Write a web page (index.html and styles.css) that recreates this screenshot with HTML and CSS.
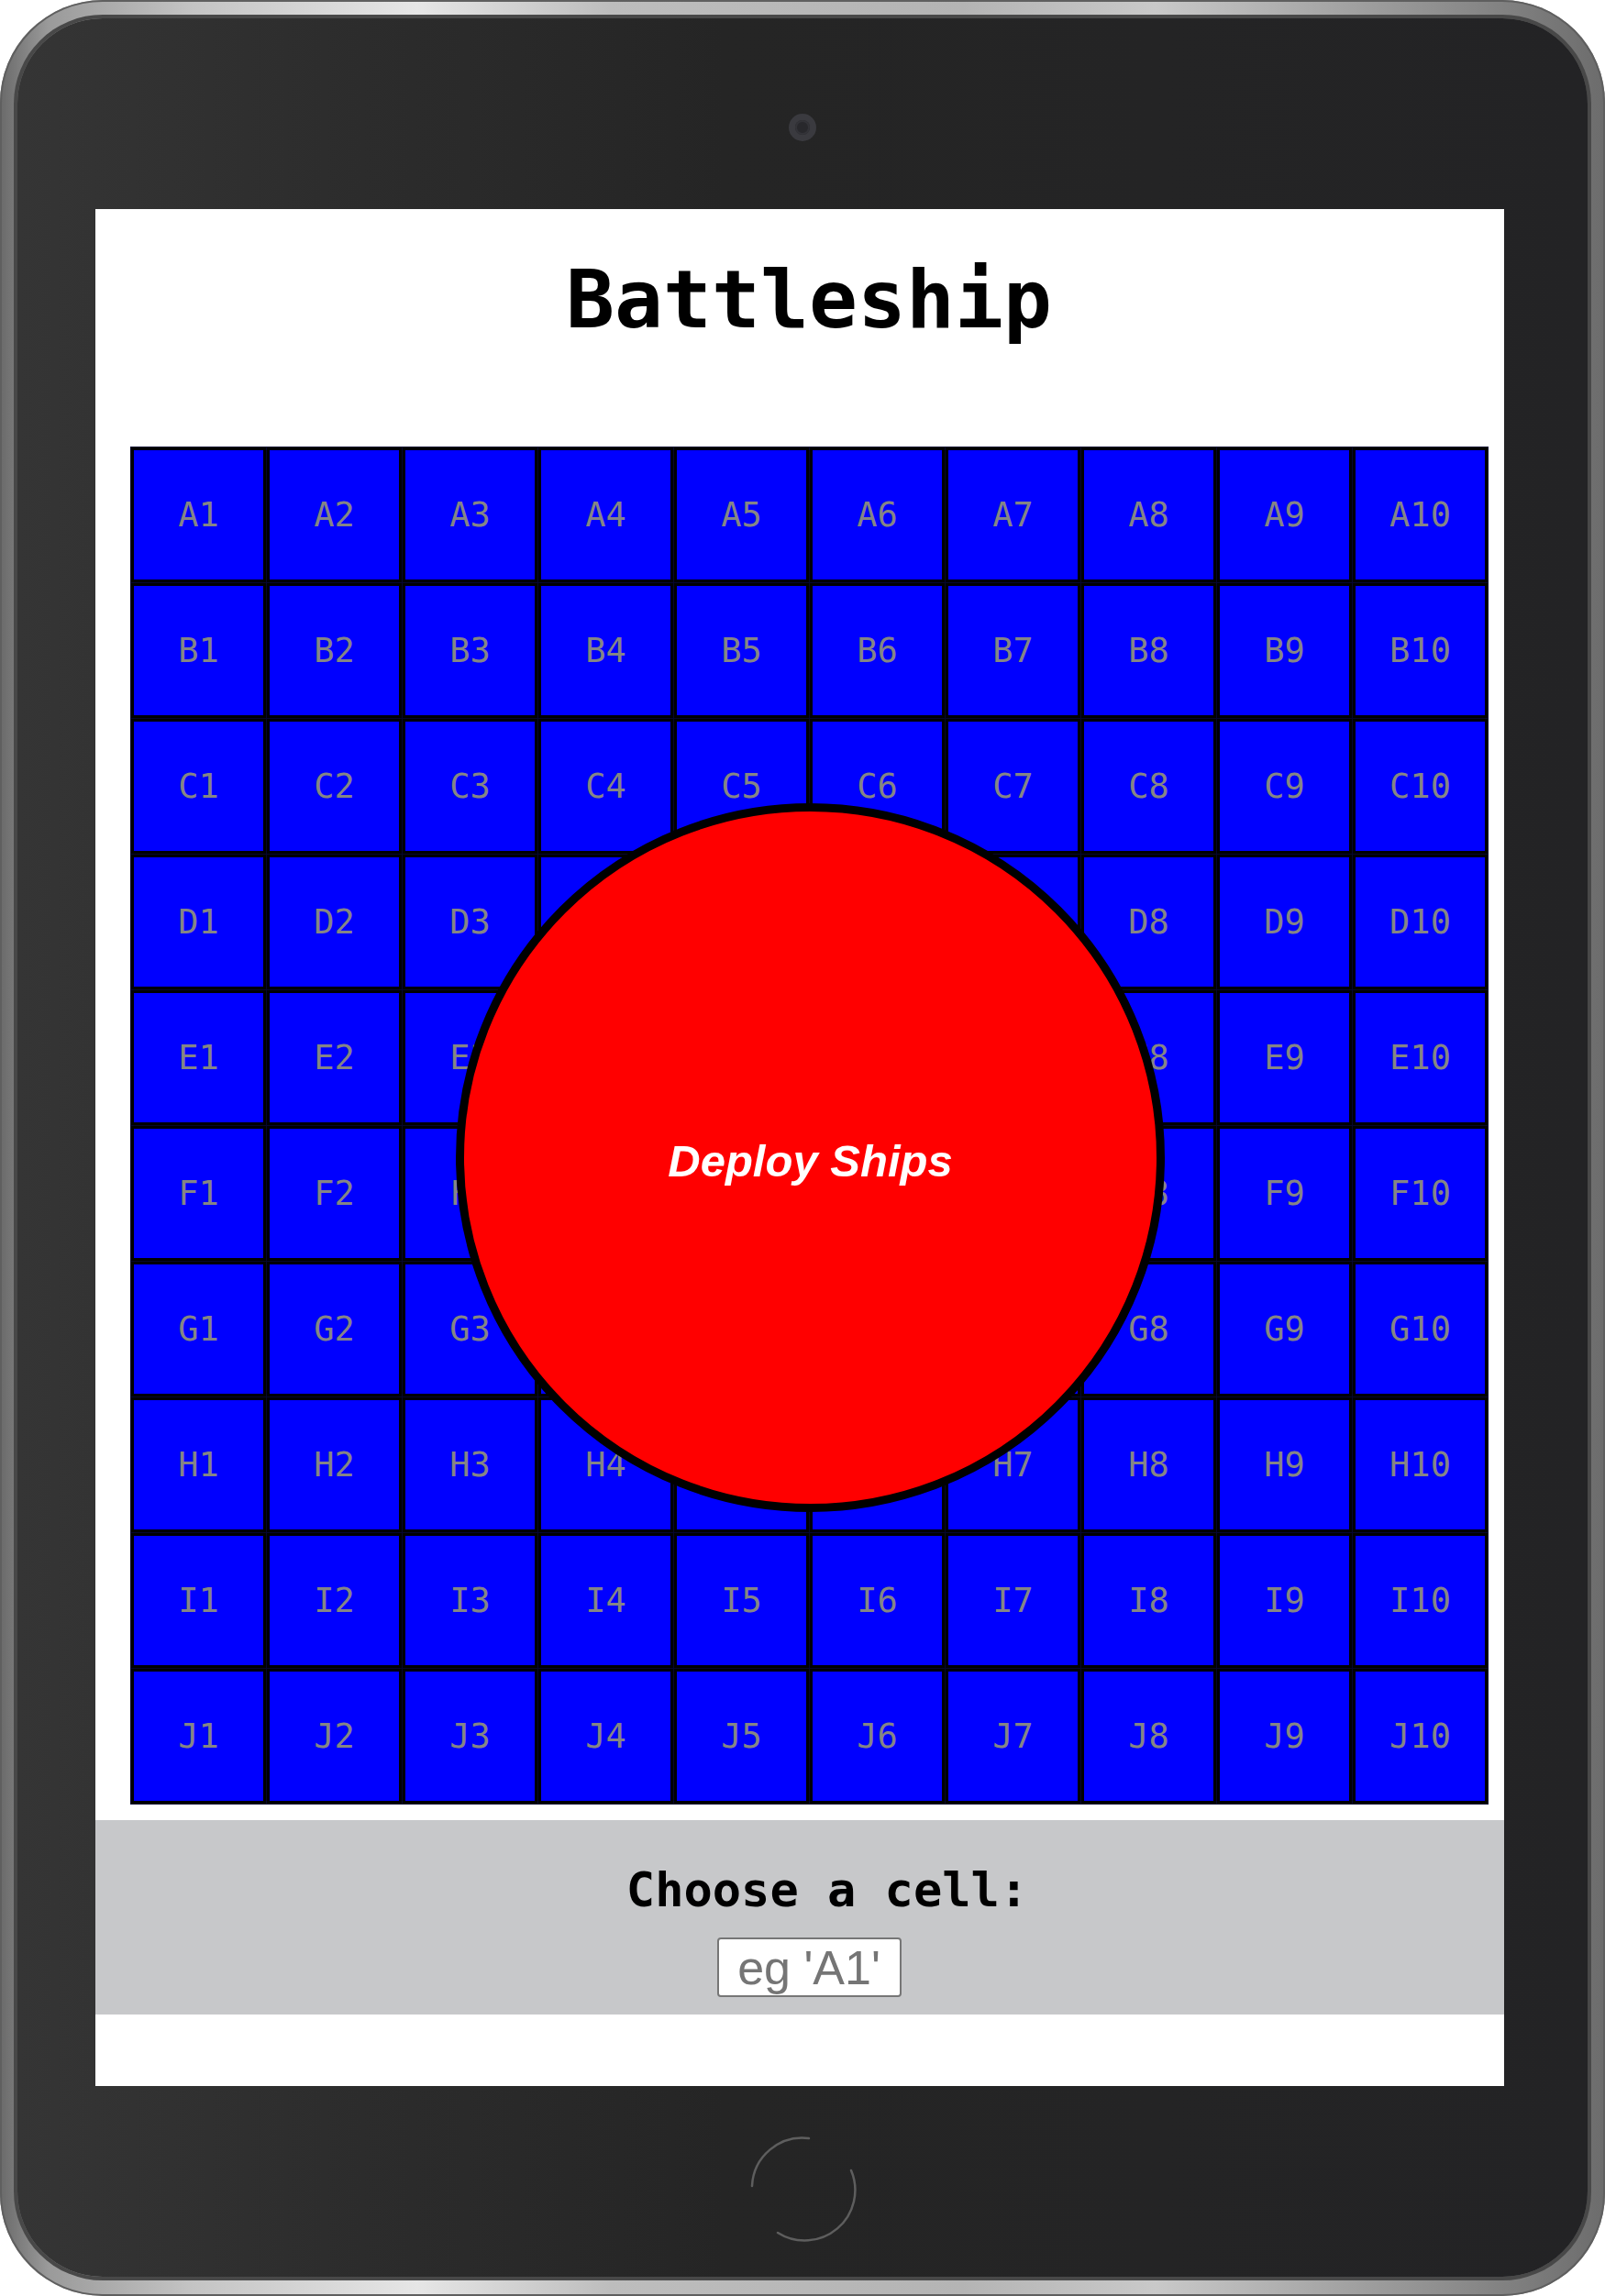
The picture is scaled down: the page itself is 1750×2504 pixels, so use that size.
FILE: index.html
```html
<!DOCTYPE html>
<html lang="en">
<head>
<meta charset="utf-8">
<title>Battleship</title>
<link rel="stylesheet" href="styles.css">
</head>
<body>
<div class="device">
  <div class="bezel">
    <div class="topbar"><div class="camera"><div class="lens"></div></div></div>
    <div class="screen">
      <div class="content">
        <h1 class="title">Battleship</h1>
        <div class="board">
          <div class="cell">A1</div><div class="cell">A2</div><div class="cell">A3</div><div class="cell">A4</div><div class="cell">A5</div><div class="cell">A6</div><div class="cell">A7</div><div class="cell">A8</div><div class="cell">A9</div><div class="cell">A10</div>
          <div class="cell">B1</div><div class="cell">B2</div><div class="cell">B3</div><div class="cell">B4</div><div class="cell">B5</div><div class="cell">B6</div><div class="cell">B7</div><div class="cell">B8</div><div class="cell">B9</div><div class="cell">B10</div>
          <div class="cell">C1</div><div class="cell">C2</div><div class="cell">C3</div><div class="cell">C4</div><div class="cell">C5</div><div class="cell">C6</div><div class="cell">C7</div><div class="cell">C8</div><div class="cell">C9</div><div class="cell">C10</div>
          <div class="cell">D1</div><div class="cell">D2</div><div class="cell">D3</div><div class="cell">D4</div><div class="cell">D5</div><div class="cell">D6</div><div class="cell">D7</div><div class="cell">D8</div><div class="cell">D9</div><div class="cell">D10</div>
          <div class="cell">E1</div><div class="cell">E2</div><div class="cell">E3</div><div class="cell">E4</div><div class="cell">E5</div><div class="cell">E6</div><div class="cell">E7</div><div class="cell">E8</div><div class="cell">E9</div><div class="cell">E10</div>
          <div class="cell">F1</div><div class="cell">F2</div><div class="cell">F3</div><div class="cell">F4</div><div class="cell">F5</div><div class="cell">F6</div><div class="cell">F7</div><div class="cell">F8</div><div class="cell">F9</div><div class="cell">F10</div>
          <div class="cell">G1</div><div class="cell">G2</div><div class="cell">G3</div><div class="cell">G4</div><div class="cell">G5</div><div class="cell">G6</div><div class="cell">G7</div><div class="cell">G8</div><div class="cell">G9</div><div class="cell">G10</div>
          <div class="cell">H1</div><div class="cell">H2</div><div class="cell">H3</div><div class="cell">H4</div><div class="cell">H5</div><div class="cell">H6</div><div class="cell">H7</div><div class="cell">H8</div><div class="cell">H9</div><div class="cell">H10</div>
          <div class="cell">I1</div><div class="cell">I2</div><div class="cell">I3</div><div class="cell">I4</div><div class="cell">I5</div><div class="cell">I6</div><div class="cell">I7</div><div class="cell">I8</div><div class="cell">I9</div><div class="cell">I10</div>
          <div class="cell">J1</div><div class="cell">J2</div><div class="cell">J3</div><div class="cell">J4</div><div class="cell">J5</div><div class="cell">J6</div><div class="cell">J7</div><div class="cell">J8</div><div class="cell">J9</div><div class="cell">J10</div>
          <button class="deploy" type="button">Deploy Ships</button>
        </div>
      </div>
      <div class="prompt">
        <label class="prompt-label" for="cell-input">Choose a cell:</label>
        <input class="prompt-input" id="cell-input" type="text" placeholder="eg 'A1'">
      </div>
    </div>
    <div class="bottombar">
      <svg class="home" width="120" height="120" viewBox="0 0 120 120" aria-hidden="true">
        <path d="M5 57 A55 55 0 0 1 67 5" fill="none" stroke="#5e5e5e" stroke-width="2.5" stroke-linecap="round"/>
        <path d="M113 40 A55 55 0 0 1 33 108" fill="none" stroke="#5e5e5e" stroke-width="2.5" stroke-linecap="round"/>
      </svg>
    </div>
  </div>
</div>
</body>
</html>
```

FILE: styles.css
```css
html, body {
  margin: 0;
  padding: 0;
  background: #ffffff;
}

.device {
  box-sizing: border-box;
  width: 1750px;
  height: 2504px;
  padding: 20px 19px 21px 19px;
  border-radius: 112px;
  background: linear-gradient(90deg, #6a6a6a 0%, #9a9a9a 3%, #c4c4c4 12%, #e6e6e6 26%, #bdbdbd 38%, #b4b4b4 60%, #c9c9c9 72%, #8e8e8e 90%, #6c6c6c 100%);
  box-shadow: inset 0 0 0 2px #5f5f5f;
}

.bezel {
  box-sizing: border-box;
  height: 100%;
  border-radius: 93px;
  background: linear-gradient(90deg, #353535 0%, #2c2c2c 22%, #252525 45%, #232325 100%);
  box-shadow: 0 0 0 4px #484848;
  display: flex;
  flex-direction: column;
}

.topbar {
  height: 208px;
  flex: none;
  display: flex;
  justify-content: center;
  align-items: flex-start;
  padding-top: 104px;
  box-sizing: border-box;
}

.camera {
  width: 30px;
  height: 30px;
  border-radius: 50%;
  background: #3a3a3f;
  display: flex;
  align-items: center;
  justify-content: center;
}

.lens {
  width: 16px;
  height: 16px;
  border-radius: 50%;
  background: #28282c;
  box-shadow: inset 0 0 0 2px #333338;
}

.screen {
  flex: none;
  width: 1536px;
  height: 2047px;
  margin: 0 91px 0 85px;
  background: #ffffff;
  overflow: hidden;
  display: flex;
  flex-direction: column;
}

.content {
  padding: 0 18px 0 38px;
}

.title {
  margin: 47px 0 0 0;
  font-family: "DejaVu Sans Mono", monospace;
  font-weight: bold;
  font-size: 88px;
  line-height: 104px;
  text-align: center;
  color: #000000;
}

.board {
  position: relative;
  margin-top: 108px;
  width: 1481px;
  display: grid;
  grid-template-columns: repeat(10, 147px);
  grid-auto-rows: 147px;
  gap: 1px;
  padding: 1px;
  box-sizing: border-box;
  background: #06062e;
}

.cell {
  box-sizing: border-box;
  border: 3px solid #000000;
  background: #0000ff;
  color: #858585;
  font-family: "DejaVu Sans Mono", monospace;
  font-size: 37px;
  display: flex;
  align-items: center;
  justify-content: center;
}

.deploy {
  position: absolute;
  left: 355px;
  top: 389px;
  width: 773px;
  height: 773px;
  box-sizing: border-box;
  border: 9px solid #000000;
  border-radius: 50%;
  background: #ff0000;
  color: #ffffff;
  font-family: "Liberation Sans", Arial, sans-serif;
  font-weight: bold;
  font-style: italic;
  font-size: 49px;
  padding: 6px 0 0 0;
  display: flex;
  align-items: center;
  justify-content: center;
}

.prompt {
  margin-top: 17px;
  background: #c7c8ca;
  padding: 46px 18px 19px 38px;
  display: flex;
  flex-direction: column;
  align-items: center;
}

.prompt-label {
  display: block;
  padding-left: 40px;
  font-family: "DejaVu Sans Mono", monospace;
  font-weight: bold;
  font-size: 52px;
  line-height: 61px;
  color: #000000;
}

.prompt-input {
  margin-top: 21px;
  box-sizing: border-box;
  width: 201px;
  height: 65px;
  border: 2px solid #767676;
  border-radius: 4px;
  padding: 0;
  background: #ffffff;
  font-family: "Liberation Sans", Arial, sans-serif;
  font-size: 52px;
  text-align: center;
  color: #000000;
}

.prompt-input::placeholder {
  color: #757575;
}

.bottombar {
  flex: none;
  height: 208px;
  box-sizing: border-box;
  padding-top: 52px;
  display: flex;
  justify-content: center;
  align-items: flex-start;
}

.home {
  display: block;
}
```
